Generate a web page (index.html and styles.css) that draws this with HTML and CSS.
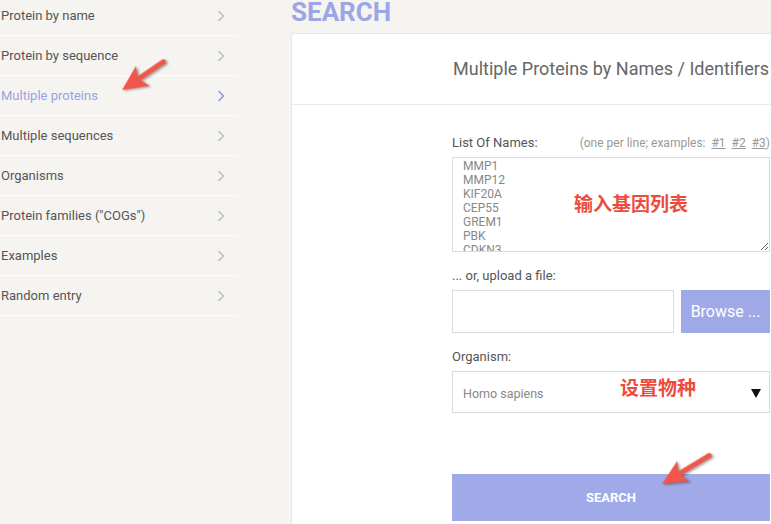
FILE: index.html
```html
<!DOCTYPE html>
<html lang="en">
<head>
<meta charset="utf-8">
<title>Search - Multiple proteins</title>
<link rel="stylesheet" href="styles.css">
</head>
<body>
<div class="page">
  <nav class="sidebar">
    <a class="nav-item" href="#">Protein by name<svg class="chev" viewBox="0 0 8 12"><path d="M1.5 1 L6.5 6 L1.5 11"/></svg></a>
    <a class="nav-item" href="#">Protein by sequence<svg class="chev" viewBox="0 0 8 12"><path d="M1.5 1 L6.5 6 L1.5 11"/></svg></a>
    <a class="nav-item active" href="#">Multiple proteins<svg class="chev" viewBox="0 0 8 12"><path d="M1.5 1 L6.5 6 L1.5 11"/></svg></a>
    <a class="nav-item" href="#">Multiple sequences<svg class="chev" viewBox="0 0 8 12"><path d="M1.5 1 L6.5 6 L1.5 11"/></svg></a>
    <a class="nav-item" href="#">Organisms<svg class="chev" viewBox="0 0 8 12"><path d="M1.5 1 L6.5 6 L1.5 11"/></svg></a>
    <a class="nav-item" href="#">Protein families ("COGs")<svg class="chev" viewBox="0 0 8 12"><path d="M1.5 1 L6.5 6 L1.5 11"/></svg></a>
    <a class="nav-item" href="#">Examples<svg class="chev" viewBox="0 0 8 12"><path d="M1.5 1 L6.5 6 L1.5 11"/></svg></a>
    <a class="nav-item" href="#">Random entry<svg class="chev" viewBox="0 0 8 12"><path d="M1.5 1 L6.5 6 L1.5 11"/></svg></a>
  </nav>
  <main class="main">
    <h1 class="title">SEARCH</h1>
    <section class="card">
      <header class="card-head">Multiple Proteins by Names / Identifiers</header>
      <form class="card-body">
        <div class="label-row">
          <label class="label">List Of Names:</label>
          <span class="hint">(one per line; examples:&nbsp; <a href="#">#1</a>&nbsp; <a href="#">#2</a>&nbsp; <a href="#">#3</a>)</span>
        </div>
        <div class="field">
          <textarea class="names">MMP1
MMP12
KIF20A
CEP55
GREM1
PBK
CDKN3
NEK2</textarea>
          <span class="note note-names">输入基因列表</span>
        </div>
        <label class="label label-gap">... or, upload a file:</label>
        <div class="upload">
          <div class="file-box"></div>
          <button type="button" class="browse">Browse ...</button>
        </div>
        <label class="label label-gap">Organism:</label>
        <div class="field select-box">
          <span class="select-text">Homo sapiens</span>
          <svg class="caret" viewBox="0 0 10 10"><polygon points="0,1 10,1 5,10"/></svg>
          <span class="note note-org">设置物种</span>
        </div>
        <button type="button" class="search-btn">SEARCH</button>
      </form>
    </section>
  </main>
</div>
<svg class="arrows" viewBox="0 0 771 524" width="771" height="524">
  <g class="arrow" transform="translate(122 90) rotate(-34.3)">
    <polygon points="0,0 25,-12 21,-2.6 50,-2.6 50,2.6 21,2.6 25,12"/>
    <circle cx="50" cy="0" r="2.6"/>
  </g>
  <g class="arrow" transform="translate(662 484) rotate(-31.1)">
    <polygon points="0,0 25,-12 21,-2.6 55,-2.6 55,2.6 21,2.6 25,12"/>
    <circle cx="55" cy="0" r="2.6"/>
  </g>
</svg>
</body>
</html>
```

FILE: styles.css
```css
html, body {
  margin: 0;
  padding: 0;
}
body {
  width: 771px;
  height: 524px;
  overflow: hidden;
  background: #f5f4f1;
  font-family: Roboto, "Liberation Sans", "Noto Sans CJK SC", sans-serif;
  color: #555;
  position: relative;
}
.page {
  display: flex;
  align-items: flex-start;
}
.sidebar {
  width: 237px;
  flex: none;
  margin-top: -4px;
  display: flex;
  flex-direction: column;
}
.nav-item {
  height: 39px;
  border-bottom: 1px solid #fdfdfc;
  display: flex;
  align-items: center;
  justify-content: space-between;
  padding: 0 12px 0 1px;
  font-size: 13px;
  color: #555;
  text-decoration: none;
}
.chev {
  width: 8px;
  height: 12px;
  fill: none;
  stroke: #bdbdbd;
  stroke-width: 1.6;
}
.nav-item.active {
  color: #98a2e4;
}
.nav-item.active .chev {
  stroke: #8e99e2;
}
.main {
  margin-left: 54px;
  flex: none;
  width: 520px;
}
.title {
  margin: 0;
  font-size: 26px;
  line-height: 24px;
  font-weight: 700;
  color: #9ba6e7;
}
.card {
  margin-top: 9px;
  background: #fff;
  border: 1px solid #e7e6e3;
  border-radius: 3px;
  height: 600px;
}
.card-head {
  height: 68px;
  display: flex;
  align-items: center;
  padding-left: 161px;
  padding-bottom: 2px;
  border-bottom: 1px solid #ebebeb;
  font-size: 18px;
  color: #666;
}
.card-body {
  padding: 30px 0 0 160px;
  width: 318px;
  display: flex;
  flex-direction: column;
}
.label-row {
  display: flex;
  justify-content: space-between;
  align-items: center;
  height: 16px;
  margin-bottom: 6px;
}
.label {
  font-size: 13px;
  line-height: 16px;
  color: #555;
}
.label-gap {
  margin-top: 16px;
  margin-bottom: 6px;
}
.hint {
  font-size: 12px;
  color: #999;
}
.hint a {
  color: #999;
}
.field {
  position: relative;
}
.names {
  display: block;
  box-sizing: border-box;
  width: 318px;
  height: 95px;
  margin: 0;
  border: 1px solid #dcdcdc;
  padding: 1px 10px;
  font-family: Roboto, "Liberation Sans", sans-serif;
  font-size: 12px;
  line-height: 14px;
  color: #888;
  overflow: hidden;
  resize: vertical;
  background: #fff;
}
.note {
  position: absolute;
  font-family: "Noto Sans CJK SC", sans-serif;
  font-weight: 700;
  font-size: 19px;
  line-height: 19px;
  color: #ec4b3d;
  white-space: nowrap;
}
.note-names {
  left: 122px;
  top: 36px;
}
.note-org {
  left: 167px;
  top: 5px;
}
.upload {
  display: flex;
  gap: 7px;
  height: 43px;
}
.file-box {
  width: 222px;
  box-sizing: border-box;
  border: 1px solid #dcdcdc;
  background: #fff;
}
.browse {
  flex: 1;
  border: none;
  margin: 0;
  background: #9fa9e8;
  color: #fff;
  font-family: Roboto, "Liberation Sans", sans-serif;
  font-size: 16px;
  padding: 0;
}
.select-box {
  box-sizing: border-box;
  height: 42px;
  border: 1px solid #dcdcdc;
  display: flex;
  align-items: center;
  justify-content: space-between;
  padding: 2px 8px 0 10px;
}
.select-text {
  font-size: 12.5px;
  color: #888;
}
.caret {
  width: 10px;
  height: 10px;
  fill: #111;
}
.search-btn {
  margin-top: 61px;
  height: 47px;
  border: none;
  background: #a0aae8;
  color: #fff;
  font-family: Roboto, "Liberation Sans", sans-serif;
  font-weight: 700;
  font-size: 13px;
  padding: 0;
}
.arrows {
  position: absolute;
  left: 0;
  top: 0;
  pointer-events: none;
}
.arrow {
  fill: #f0564a;
  filter: drop-shadow(1px 2px 1px rgba(0, 0, 0, 0.35));
}
```
